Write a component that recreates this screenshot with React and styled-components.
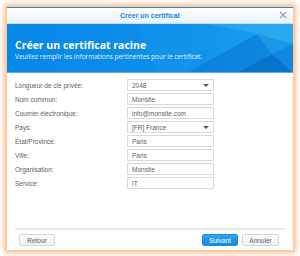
import styled, { createGlobalStyle } from "styled-components";

const GlobalStyle = createGlobalStyle`
    html, body {
        margin: 0;
        padding: 0;
        background: #ffffff;
        font-family: "Liberation Sans", Arial, sans-serif;
    }
`

const Page = styled.div`
    width: 300px;
    height: 256px;
    padding: 7px;
    box-sizing: border-box;
`
const Window = styled.div`
    width: 286px;
    height: 243px;
    background: #fff;
    display: flex;
    flex-direction: column;
    box-shadow: 0 0 0 1px #ffc9a0, 0 0 5px 3px #ffbb88;
    border-top: 1px solid #1e8fe6;
    box-sizing: border-box;
`
const TitleBar = styled.div`
    height: 15px;
    flex: none;
    position: relative;
    display: flex;
    align-items: center;
    justify-content: center;
    background: linear-gradient(#ffffff, #e6f2fc);
    border-bottom: 1px solid #c7ddf0;
    color: #1f86d6;
    font-size: 7px;
    font-weight: bold;
`
const CloseBtn = styled.span`
    position: absolute;
    right: 6px;
    top: 3px;
    width: 8px;
    height: 8px;
`
const Header = styled.div`
    height: 49px;
    flex: none;
    position: relative;
    overflow: hidden;
    background: #0c8be9;
    color: #fff;
    padding: 15px 0 0 8px;
    box-sizing: border-box;
    border-bottom: 1px solid #53aef0;
`
const HeaderArt = styled.svg`
    position: absolute;
    inset: 0;
`
const HeaderTitle = styled.div`
    position: relative;
    font-family: "Open Sans", "Liberation Sans", sans-serif;
    font-size: 10.5px;
    font-weight: bold;
    line-height: 13px;
`
const HeaderSub = styled.div`
    position: relative;
    font-family: "Open Sans", "Liberation Sans", sans-serif;
    font-size: 6.5px;
    line-height: 9px;
    color: #e3f1fd;
`
const Form = styled.div`
    flex: 1;
    display: flex;
    flex-direction: column;
    gap: 2px;
    padding: 6px 0 0 8px;
`
const Row = styled.div`
    display: flex;
    align-items: center;
    height: 12px;
`
const Label = styled.div`
    width: 112px;
    font-size: 6.5px;
    color: #5b6168;
`
const Field = styled.div`
    width: 87px;
    height: 12px;
    box-sizing: border-box;
    border: 1px solid #d6dbe0;
    background: #fff;
    display: flex;
    align-items: center;
    justify-content: space-between;
    padding: 0 4px;
    font-size: 6.5px;
    color: #5b6168;
`
const Caret = styled.span`
    width: 0;
    height: 0;
    border-left: 3px solid transparent;
    border-right: 3px solid transparent;
    border-top: 3px solid #555;
`
const Footer = styled.div`
    flex: none;
    margin: 0 8px;
    border-top: 2px solid #e8ebee;
    height: 20px;
    display: flex;
    align-items: center;
    gap: 4px;
    padding: 0 6px 0 4px;
`
const Spacer = styled.div`
    flex: 1;
`
const Button = styled.div`
    width: ${p => p.w || 36}px;
    height: 12px;
    box-sizing: border-box;
    border-radius: 2px;
    display: flex;
    align-items: center;
    justify-content: center;
    font-size: 6.5px;
    border: 1px solid ${p => p.primary ? "#1a8ee0" : "#cfd6dd"};
    background: ${p => p.primary ? "linear-gradient(#2fa2f2, #168ae3)" : "linear-gradient(#fbfcfd, #eef1f4)"};
    color: ${p => p.primary ? "#fff" : "#5b6168"};
`

const rows = [
    ["Longueur de clé privée:", "2048", true],
    ["Nom commun:", "Monsite"],
    ["Courrier électronique:", "info@monsite.com"],
    ["Pays:", "[FR] France", true],
    ["État/Province:", "Paris"],
    ["Ville:", "Paris"],
    ["Organisation:", "Monsite"],
    ["Service:", "IT"],
]

export default function App() {
    return (
        <Page>
            <GlobalStyle />
            <Window>
                <TitleBar>
                    Créer un certificat
                    <CloseBtn>
                        <svg width="8" height="8" viewBox="0 0 8 8">
                            <path d="M1 1L7 7M7 1L1 7" stroke="#9aa3ab" strokeWidth="1.2" />
                        </svg>
                    </CloseBtn>
                </TitleBar>
                <Header>
                    <HeaderArt width="286" height="49" viewBox="0 0 286 49">
                        <defs>
                            <linearGradient id="hg" x1="0" y1="0" x2="1" y2="0">
                                <stop offset="0" stopColor="#0787e8" />
                                <stop offset="0.6" stopColor="#0e8fea" />
                                <stop offset="1" stopColor="#1fa3f0" />
                            </linearGradient>
                        </defs>
                        <rect width="286" height="49" fill="url(#hg)" />
                        <polygon points="130,0 220,0 175,49 150,49" fill="#1596ec" opacity="0.5" />
                        <polygon points="180,49 250,10 286,20 286,49" fill="#0573cf" opacity="0.55" />
                        <polygon points="200,0 286,0 286,20 250,10" fill="#35b0f4" opacity="0.5" />
                        <polygon points="230,49 265,30 286,49" fill="#045fb8" opacity="0.5" />
                        <polygon points="250,10 265,30 286,20" fill="#2aa7f2" opacity="0.5" />
                    </HeaderArt>
                    <HeaderTitle>Créer un certificat racine</HeaderTitle>
                    <HeaderSub>Veuillez remplir les informations pertinentes pour le certificat.</HeaderSub>
                </Header>
                <Form>
                    {rows.map(([label, value, select]) => (
                        <Row key={label}>
                            <Label>{label}</Label>
                            <Field>
                                {value}
                                {select && <Caret />}
                            </Field>
                        </Row>
                    ))}
                </Form>
                <Footer>
                    <Button>Retour</Button>
                    <Spacer />
                    <Button primary>Suivant</Button>
                    <Button w={37}>Annuler</Button>
                </Footer>
            </Window>
        </Page>
    )
}
